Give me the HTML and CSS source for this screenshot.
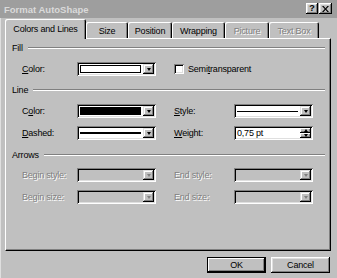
FILE: index.html
```html
<!DOCTYPE html>
<html>
<head>
<meta charset="utf-8">
<link rel="stylesheet" href="styles.css">
</head>
<body>
<div class="dialog">
  <div class="titlebar">
    <span class="title">Format AutoShape</span>
    <div class="tbtns">
      <span class="tbtn q">?</span>
      <span class="tbtn x"><svg width="7" height="6" viewBox="0 0 7 6"><path d="M0 0h1.6L3.5 2.2 5.4 0H7L4.3 3 7 6H5.4L3.5 3.8 1.6 6H0L2.7 3z" fill="#000"/></svg></span>
    </div>
  </div>
  <div class="tabs">
    <div class="tab sel t1">Colors and Lines</div>
    <div class="tab t2">Size</div>
    <div class="tab t3">Position</div>
    <div class="tab t4">Wrapping</div>
    <div class="tab t5 dis">Picture</div>
    <div class="tab t6 dis">Text Box</div>
  </div>
  <div class="panel">
    <div class="ghead g1"><span>Fill</span><i class="rule"></i></div>
    <div class="row r1">
      <span class="lab"><u>C</u>olor:</span>
      <div class="combo"><div class="field"><div class="swatch white"></div></div><div class="drop"><i class="arr"></i></div></div>
      <div class="chk"></div><span class="chklab">Semi<u>t</u>ransparent</span>
    </div>
    <div class="ghead g2"><span>Line</span><i class="rule"></i></div>
    <div class="row r2">
      <span class="lab">C<u>o</u>lor:</span>
      <div class="combo"><div class="field"><div class="swatch black"></div></div><div class="drop"><i class="arr"></i></div></div>
      <span class="rlab"><u>S</u>tyle:</span>
      <div class="combo"><div class="field line"><i class="ln thin"></i></div><div class="drop"><i class="arr"></i></div></div>
    </div>
    <div class="row r3">
      <span class="lab"><u>D</u>ashed:</span>
      <div class="combo"><div class="field line"><i class="ln thick"></i></div><div class="drop"><i class="arr"></i></div></div>
      <span class="rlab"><u>W</u>eight:</span>
      <div class="combo"><div class="field txt">0,75 pt</div><div class="spin"><span class="sbtn"><i class="up"></i></span><span class="sbtn"><i class="arr"></i></span></div></div>
    </div>
    <div class="ghead g3"><span>Arrows</span><i class="rule"></i></div>
    <div class="row r4">
      <span class="lab dis">Begin style:</span>
      <div class="combo off"><div class="field"></div><div class="drop"><i class="arr"></i></div></div>
      <span class="rlab dis">End style:</span>
      <div class="combo off"><div class="field"></div><div class="drop"><i class="arr"></i></div></div>
    </div>
    <div class="row r5">
      <span class="lab dis">Begin size:</span>
      <div class="combo off"><div class="field"></div><div class="drop"><i class="arr"></i></div></div>
      <span class="rlab dis">End size:</span>
      <div class="combo off"><div class="field"></div><div class="drop"><i class="arr"></i></div></div>
    </div>
  </div>
  <div class="buttons">
    <div class="btn def"><span>OK</span></div>
    <div class="btn">Cancel</div>
  </div>
</div>
</body>
</html>
```

FILE: styles.css
```css
html, body {
  margin: 0;
  padding: 0;
  background: #c0c0c0;
}
body {
  font-family: "Liberation Sans", Arial, sans-serif;
  font-size: 9px;
  letter-spacing: -0.2px;
  color: #000;
}
.dialog {
  width: 337px;
  height: 278px;
  box-sizing: border-box;
  background: #c0c0c0;
  box-shadow: inset 1px 0 #dfdfdf;
}
.titlebar {
  height: 18px;
  background: #9e9e9e;
  display: flex;
  align-items: center;
  padding: 0 5px 0 4px;
}
.title {
  flex: 1;
  color: #dadada;
  font-weight: bold;
  font-size: 9.5px;
  letter-spacing: 0;
}
.tbtns {
  display: flex;
  gap: 1px;
  margin-top: -1px;
}
.tbtn {
  width: 12px;
  height: 11px;
  background: #c0c0c0;
  box-shadow: inset -1px -1px #000, inset 1px 1px #fff, inset -2px -2px #808080, inset 2px 2px #dfdfdf;
  display: flex;
  align-items: center;
  justify-content: center;
  font-weight: bold;
  font-size: 9px;
  line-height: 1;
}
.tbtn.x { width: 13px; }
.tbtn.q { padding-bottom: 1px; box-sizing: border-box; }

.tabs {
  display: flex;
  align-items: flex-end;
  height: 18px;
  margin-top: 2px;
  padding-left: 5px;
}
.tab {
  height: 16px;
  box-sizing: border-box;
  display: flex;
  align-items: center;
  justify-content: center;
  padding-top: 1px;
  box-shadow: inset 1px 1px #fff, inset -1px 0 #000, inset -2px 0 #808080;
  border-radius: 2px 2px 0 0;
}
.tab.sel {
  height: 20px;
  margin-bottom: -1px;
  position: relative;
  z-index: 2;
  background: #c0c0c0;
  padding-top: 0;
  padding-bottom: 1px;
}
.tab.dis {
  color: #808080;
  text-shadow: 1px 1px 0 #fff;
}
.t1 { width: 81px; }
.t2 { width: 42px; }
.t3 { width: 44px; }
.t4 { width: 53px; }
.t5 { width: 44px; }
.t6 { width: 50px; }

.panel {
  margin-left: 5px;
  width: 326px;
  height: 213px;
  box-sizing: border-box;
  border-top: 1px solid #fff;
  border-left: 1px solid #fff;
  border-right: 1px solid #000;
  border-bottom: 1px solid #000;
  box-shadow: inset -1px -1px #808080;
  padding: 3px 5px 0 6px;
  position: relative;
  z-index: 1;
}
.ghead {
  display: flex;
  align-items: center;
  gap: 5px;
  height: 12px;
}
.rule {
  flex: 1;
  height: 0;
  border-top: 1px solid #808080;
  border-bottom: 1px solid #fff;
}
.g2 { margin-top: 8px; }
.g3 { margin-top: 9px; }
.row {
  display: flex;
  align-items: center;
  height: 14px;
  padding-left: 10px;
  margin-top: 8px;
}
.r4 { margin-top: 7px; }
.lab { width: 55px; }
.rlab { width: 60px; margin-left: 18px; }
.dis {
  color: #808080;
  text-shadow: 1px 1px 0 #fff;
}
.combo {
  width: 79px;
  height: 14px;
  box-sizing: border-box;
  padding: 2px;
  display: flex;
  background: #fff;
  box-shadow: inset 1px 1px #808080, inset -1px -1px #fff, inset 2px 2px #000, inset -2px -2px #dfdfdf;
}
.combo.off { background: #c0c0c0; }
.field {
  flex: 1;
  display: flex;
  align-items: center;
}
.swatch {
  flex: 1;
  height: 8px;
  margin: 0 2px 0 1px;
  box-sizing: border-box;
  border: 1px solid #000;
}
.swatch.white { background: #fff; }
.swatch.black { background: #000; }
.ln {
  flex: 1;
  margin: 0 2px 0 1px;
  background: #000;
}
.ln.thin { height: 1px; }
.ln.thick { height: 2px; }
.field.txt { padding-left: 1px; }
.drop {
  width: 11px;
  height: 10px;
  background: #c0c0c0;
  box-shadow: inset -1px -1px #000, inset 1px 1px #dfdfdf, inset -2px -2px #808080, inset 2px 2px #fff;
  display: flex;
  align-items: center;
  justify-content: center;
}
.arr {
  width: 0;
  height: 0;
  border-left: 2.5px solid transparent;
  border-right: 2.5px solid transparent;
  border-top: 3px solid #000;
}
.up {
  width: 0;
  height: 0;
  border-left: 2.5px solid transparent;
  border-right: 2.5px solid transparent;
  border-bottom: 3px solid #000;
}
.off .arr { border-top-color: #808080; }
.spin {
  width: 11px;
  display: flex;
  flex-direction: column;
}
.sbtn {
  flex: 1;
  background: #c0c0c0;
  box-shadow: inset -1px -1px #000, inset 1px 1px #fff, inset -2px -2px #808080;
  display: flex;
  align-items: center;
  justify-content: center;
}
.chk {
  width: 10px;
  height: 10px;
  margin-left: 18px;
  background: #fff;
  box-shadow: inset 1px 1px #808080, inset -1px -1px #fff, inset 2px 2px #000, inset -2px -2px #dfdfdf;
}
.chklab { margin-left: 4px; }

.buttons {
  display: flex;
  justify-content: flex-end;
  gap: 5px;
  margin-top: 6px;
  padding-right: 7px;
}
.btn {
  width: 59px;
  height: 16px;
  box-sizing: border-box;
  display: flex;
  align-items: center;
  justify-content: center;
  background: #c0c0c0;
  box-shadow: inset -1px -1px #000, inset 1px 1px #fff, inset -2px -2px #808080, inset 2px 2px #dfdfdf;
}
.btn.def {
  box-shadow: inset 0 0 0 1px #000, inset -2px -2px #000, inset 2px 2px #fff, inset -3px -3px #808080;
}
```
